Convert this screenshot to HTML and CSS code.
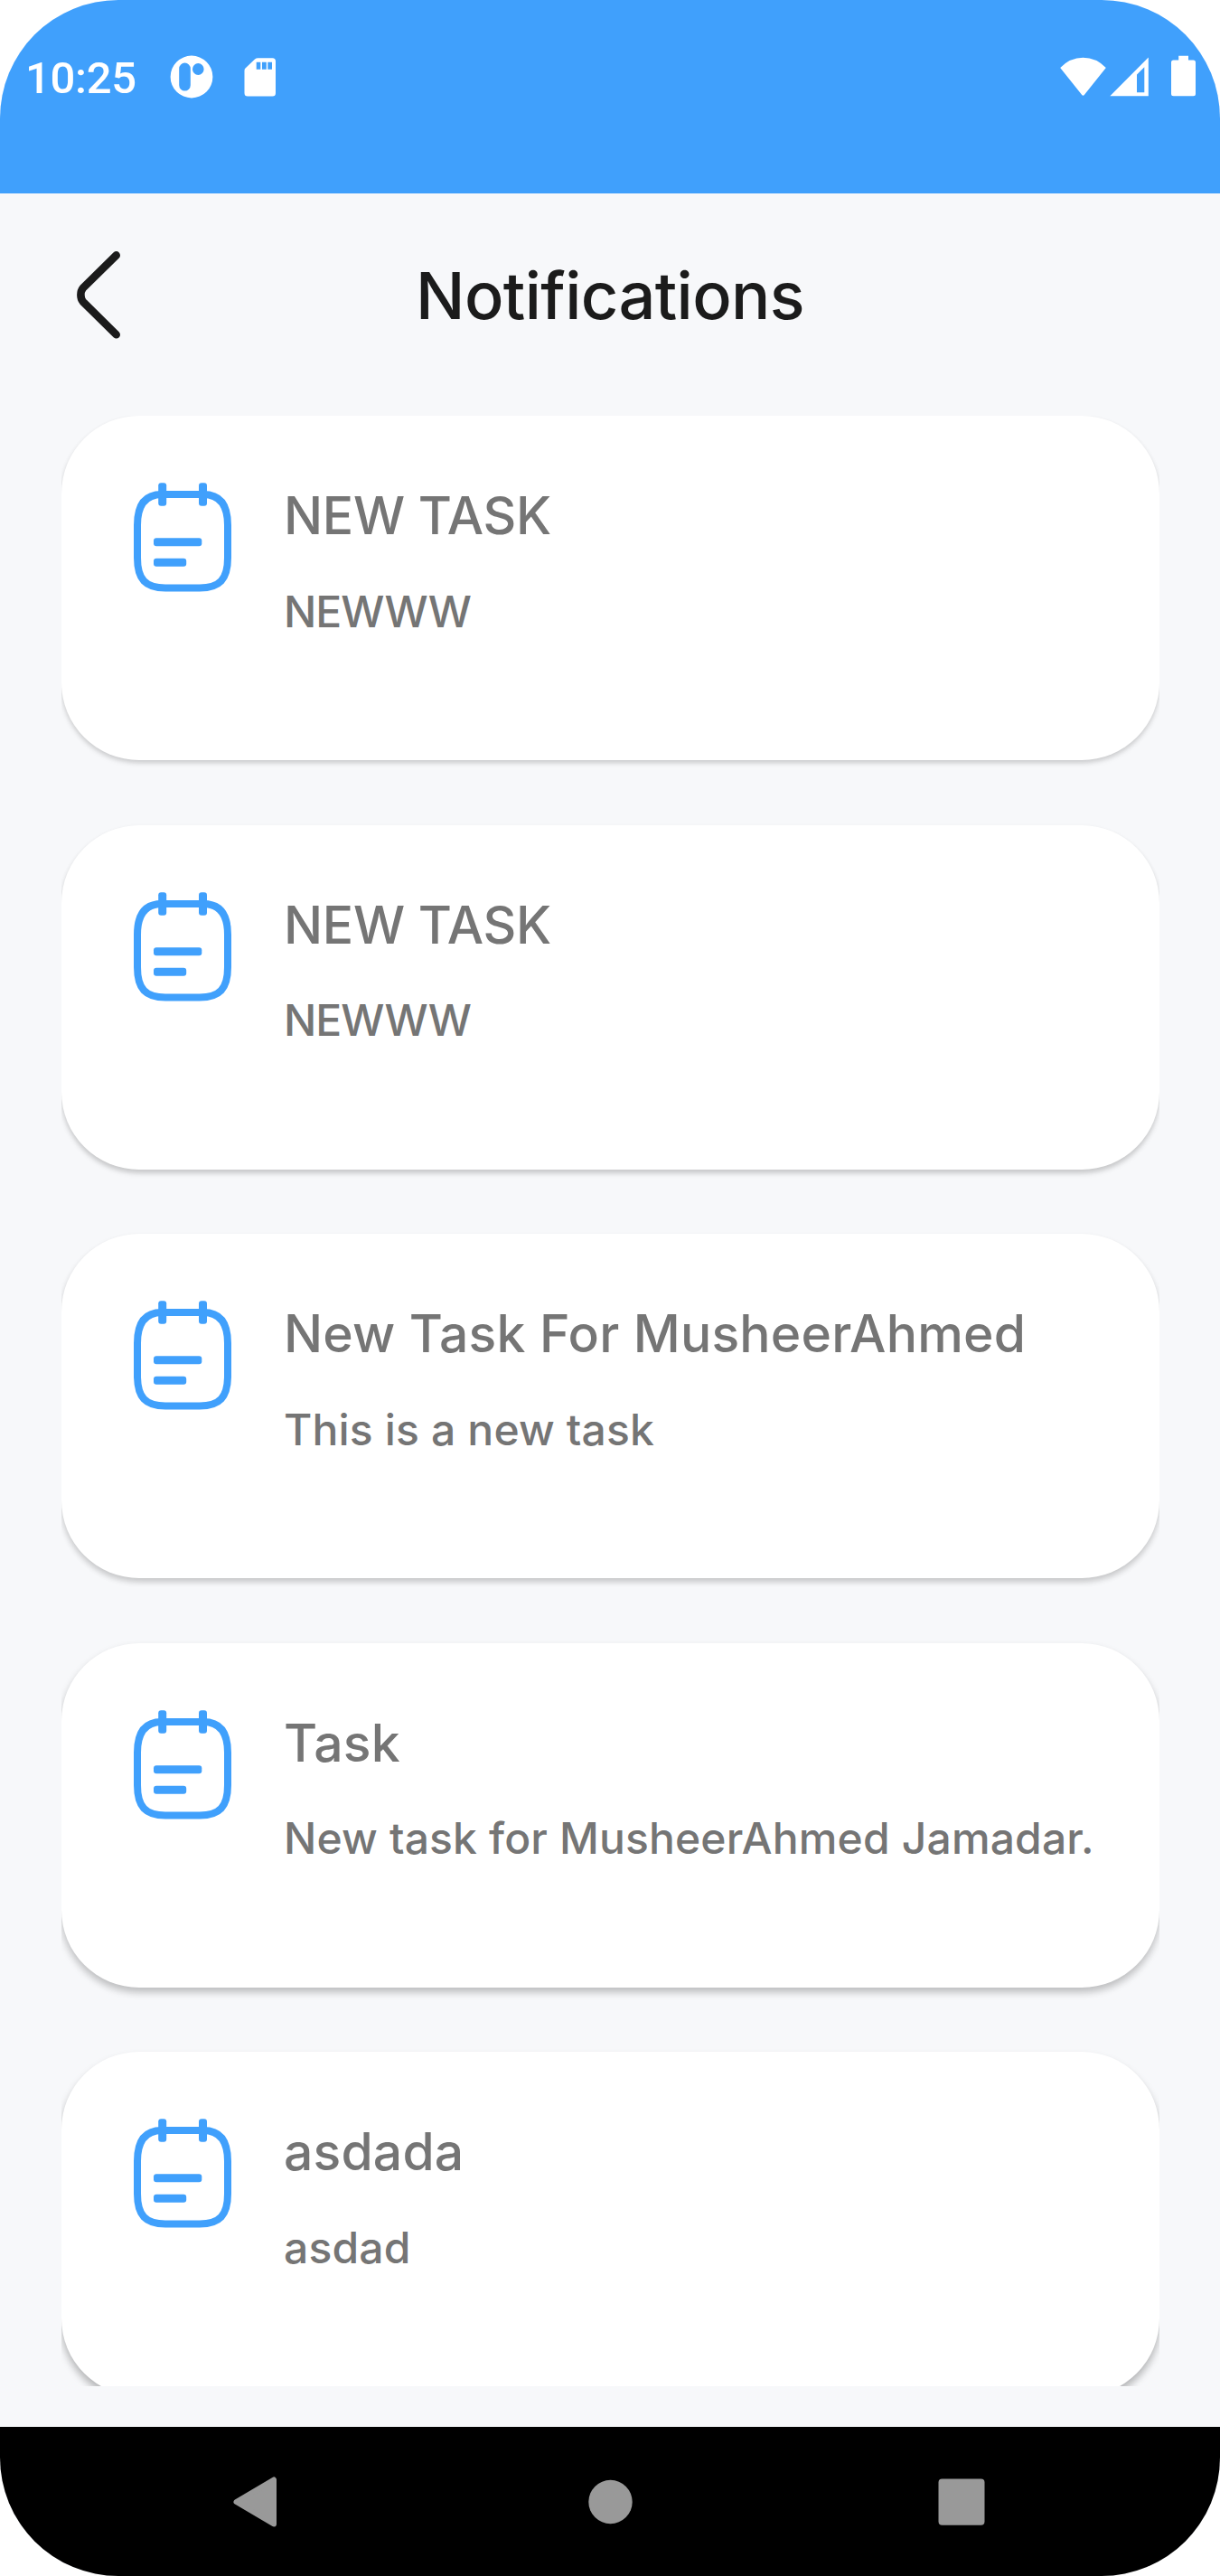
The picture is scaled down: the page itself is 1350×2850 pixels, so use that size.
FILE: index.html
```html
<!DOCTYPE html>
<html lang="en">
<head>
<meta charset="utf-8">
<title>Notifications</title>
<link rel="stylesheet" href="styles.css">
</head>
<body>
<svg class="defs" aria-hidden="true">
  <symbol id="note" viewBox="148 534 108 121">
    <path fill="none" stroke="#40a0fc" stroke-width="8" d="M179 547H225C245 547 252 561 252 581V617C252 641 243 650.5 221 650.5H183C161 650.5 152 641 152 617V581C152 561 159 547 179 547Z"/>
    <g fill="#40a0fc">
      <rect x="175.2" y="534.3" width="9" height="25.5" rx="3"/>
      <rect x="220" y="534.3" width="9" height="25.5" rx="3"/>
      <rect x="170" y="595.3" width="53.3" height="9" rx="3"/>
      <rect x="170" y="617.8" width="36.2" height="9" rx="3"/>
    </g>
  </symbol>
</svg>
<div class="phone">
  <header class="status">
    <span class="clock">10:25</span>
    <svg class="app" width="48" height="48" viewBox="188 60.3 48 48"><path fill="#fff" fill-rule="evenodd" d="M188.6 84.3a23.4 23.4 0 1 0 46.8 0a23.4 23.4 0 1 0-46.8 0ZM198.2 75.2a6.3 6.3 0 0 1 12.6 0V93.5a6.3 6.3 0 0 1-12.6 0ZM213 75.8a6.3 6.5 0 1 0 12.6 0a6.3 6.5 0 1 0-12.6 0Z"/></svg>
    <svg class="sd" width="36" height="43" viewBox="270 63 36 43"><path fill="#fff" fill-rule="evenodd" d="M285.5 63.2H301.500Q305 63.2 305 66.700V102Q305 105.500 301.500 105.500H274Q270.500 105.500 270.500 102V77Q270.500 75 272 74L282 64.500Q283.500 63.200 285.500 63.200ZM283.700 67.700V75.800H288.300V67.700ZM290 67.700V75.800H294.800V67.700ZM296.300 67.700V75.800H301V67.700Z"/></svg>
    <svg class="signals" width="152" height="46" viewBox="1172 60.500 152 46">
      <path fill="#fff" d="M1173.200 74.500Q1184 63.200 1198.500 63.200T1223.800 74.500L1200 104.300Q1198.500 106.300 1197 104.300Z"/>
      <path fill="#fff" fill-rule="evenodd" d="M1228.300 105.800L1270.800 63V105.800ZM1258 82V101.800H1266.300V73.800Z"/>
      <path fill="#fff" d="M1304.200 61.300H1315V66H1320.500Q1323 66 1323 68.500V103.300Q1323 105.800 1320.500 105.800H1298.500Q1296 105.800 1296 103.300V68.500Q1296 66 1298.500 66H1304.200Z"/>
    </svg>
  </header>
  <div class="titlebar">
    <svg class="back" width="54" height="102" viewBox="82 275.500 54 102"><path fill="none" stroke="#1b1b1b" stroke-width="8.6" stroke-linecap="round" d="M128.700 281.900L91.800 318.200C88.600 322 88.600 329.500 91.800 333.300L128.700 369.800"/></svg>
    <h1>Notifications</h1>
  </div>
  <main class="list">
    <article class="card"><svg class="note"><use href="#note"/></svg><div class="text"><h2 class="caps">NEW TASK</h2><p class="caps">NEWWW</p></div></article>
    <article class="card"><svg class="note"><use href="#note"/></svg><div class="text"><h2 class="caps">NEW TASK</h2><p class="caps">NEWWW</p></div></article>
    <article class="card"><svg class="note"><use href="#note"/></svg><div class="text"><h2>New Task For MusheerAhmed</h2><p>This is a new task</p></div></article>
    <article class="card"><svg class="note"><use href="#note"/></svg><div class="text"><h2>Task</h2><p>New task for MusheerAhmed Jamadar.</p></div></article>
    <article class="card"><svg class="note"><use href="#note"/></svg><div class="text"><h2>asdada</h2><p>asdad</p></div></article>
  </main>
  <nav class="nav">
    <svg width="54" height="60" viewBox="256 2738 54 60"><path fill="#999" stroke="#999" stroke-width="6" stroke-linejoin="round" d="M261.500 2768L303 2743.500V2792.500Z"/></svg>
    <svg width="54" height="60" viewBox="0 0 54 60"><circle cx="28.500" cy="30" r="24.200" fill="#999"/></svg>
    <svg width="54" height="60" viewBox="0 0 54 60"><rect x="1.500" y="4.500" width="51" height="51.300" rx="4" fill="#999"/></svg>
  </nav>
</div>
</body>
</html>
```
FILE: styles.css
```css
* {
  box-sizing: border-box;
  margin: 0;
  padding: 0;
}

body {
  background: #fff;
  font-family: Inter, "Liberation Sans", sans-serif;
  font-weight: 450;
  font-optical-sizing: none;
}

svg {
  display: block;
  flex: none;
}

.defs {
  position: absolute;
  width: 0;
  height: 0;
}

.phone {
  display: flex;
  flex-direction: column;
  width: 1350px;
  height: 2850px;
  border-radius: 131px;
  overflow: hidden;
  background: #f7f8fa;
}

/* status bar */
.status {
  display: flex;
  align-items: flex-start;
  height: 214px;
  padding: 60.5px 26.5px 0 28px;
  background: #40a0fc;
  color: #fff;
}

.clock {
  width: 160px;
  font: 500 49px/52px Roboto, sans-serif;
  letter-spacing: -0.3px;
}

.sd {
  margin: 3px 0 0 34px;
}

.signals {
  margin-left: auto;
}

/* title bar */
.titlebar {
  display: grid;
  grid-template-columns: 136px 1fr 136px;
  align-items: center;
  height: 225px;
  margin-bottom: 21px;
}

.back {
  justify-self: end;
}

h1 {
  color: #1b1b1b;
  font-size: 72px;
  font-weight: 450;
  line-height: 90px;
  letter-spacing: -0.6px;
  text-align: center;
}

/* notification list */
.list {
  display: flex;
  flex-direction: column;
  gap: 71.6px;
  width: 1215px;
  height: 2180px;
  margin-left: 68px;
  overflow: hidden;
}

.card {
  display: flex;
  flex: none;
  gap: 58px;
  height: 381px;
  padding: 74px 0 0 80px;
  border-radius: 86px;
  background: #fff;
  box-shadow: 0 3px 5px rgba(0, 0, 0, 0.16), 0 4px 10px rgba(0, 0, 0, 0.03);
}

.card:nth-child(2) {
  box-shadow: 0 3.5px 5px rgba(0, 0, 0, 0.17), 0 5px 10px rgba(0, 0, 0, 0.03);
}

.card:nth-child(3) {
  box-shadow: 0 4px 6px rgba(0, 0, 0, 0.18), 0 5px 10px rgba(0, 0, 0, 0.03);
}

.card:nth-child(4) {
  box-shadow: 0 5px 8px rgba(0, 0, 0, 0.22), 0 6px 10px rgba(0, 0, 0, 0.03);
}

.card:nth-child(5) {
  box-shadow: 0 6px 9px rgba(0, 0, 0, 0.25), 0 6px 10px rgba(0, 0, 0, 0.03);
}

.note {
  width: 108px;
  height: 121px;
}

.text {
  display: flex;
  flex-direction: column;
  gap: 40.5px;
  padding-top: 2px;
  color: #757575;
  white-space: nowrap;
}

h2 {
  font-size: 57px;
  font-weight: 450;
  line-height: 70px;
  letter-spacing: 0.18px;
}

h2.caps {
  letter-spacing: -0.3px;
}

p {
  font-size: 48px;
  line-height: 60px;
  letter-spacing: 0.16px;
}

p.caps {
  letter-spacing: -1px;
}
/* system navigation */
.nav {
  display: flex;
  justify-content: space-between;
  height: 165px;
  margin-top: 45px;
  padding: 53px 259px 0 256px;
  background: #000;
}
```
